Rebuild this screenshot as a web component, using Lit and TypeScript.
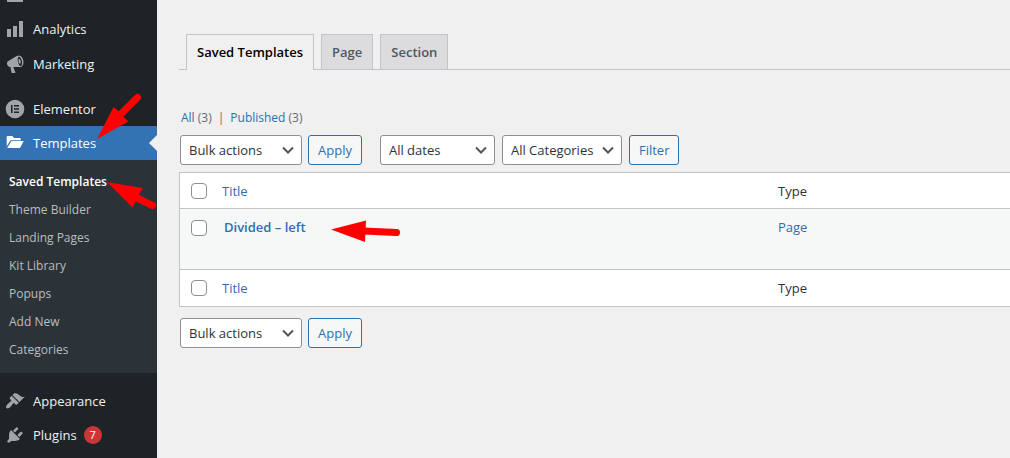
import { LitElement, html, css, svg, nothing } from "lit";
import { customElement, property } from "lit/decorators.js";

const icons: Record<string, unknown> = {
  box: svg`<path d="M2 2h16v15h-16z"/>`,
  analytics: svg`<path d="M2 10h4v8H2zM8 7h4v11H8zM14 2h4v16h-4z"/>`,
  marketing: svg`<path fill-rule="evenodd" d="M18.150 5.940c.460 1.620.380 3.220-.020 4.480-.420 1.280-1.260 2.180-2.300 2.480-.160.060-.260.060-.400.060-.060.020-.120.020-.180.020-.060.020-.140.020-.220.020h-6.800l2.220 5.500c.020.140-.060.260-.140.340-.080.100-.200.160-.340.160H6.950c-.100 0-.220-.060-.320-.160-.080-.080-.160-.200-.160-.340L5.450 13c-1.080-.120-1.880-.320-2.580-1.260-.500-.700-.800-1.340-.940-2.020-.060-1.040.360-2.100 1.500-2.820L11.650 2.100c.1-.08.25-.14.4-.2.5-.26 1.080-.5 1.780-.4 1.080.1 2.120.7 2.900 1.600.6.740 1.120 1.740 1.420 2.840zm-1.560 5.500c.300-.580.460-1.420.460-2.340 0-.820-.100-1.700-.360-2.560-.220-.880-.560-1.680-.960-2.360-.400-.640-.860-1.120-1.300-1.300-.240-.100-.460-.100-.660-.040-.260.060-.460.280-.620.560-.280.580-.440 1.420-.440 2.340 0 .820.100 1.700.360 2.560.220.880.560 1.680.960 2.360.400.640.860 1.120 1.300 1.300.240.100.460.100.660.040.260-.060.440-.260.600-.560zm-1.900-6.500c.6.700 1.050 1.700 1.100 2.800.05 1.100-.2 1.900-.8 2.100l-1-.5c-.5-1.300-.7-2.900-.3-4.300z"/>`,
  elementor: svg`<path fill-rule="evenodd" d="M10 .7a9.300 9.300 0 1 0 0 18.600 9.300 9.300 0 0 0 0-18.600zM6 6h1.500v8H6zM9 6h5v1.500H9zM9 9.250h5v1.500H9zM9 12.500h5V14H9z"/>`,
  folder: svg`<path d="M1.700 13.300V4.200c0-.8.500-1.300 1.300-1.300h4.300l1.700 2h5.500c.8 0 1.300.5 1.300 1.300v1H7c-1.100 0-1.800.4-2.300 1.300zM2.300 14.700 5.800 9c.4-.7.800-.9 1.500-.9h11.400L15.500 14c-.3.600-.7 1-1.500 1H2.500z"/>`,
  appearance: svg`<path d="M14.480 11.060 7.410 3.990l1.500-1.500c.5-.56 2.300-.470 3.510.320 1.210.800 1.430 1.280 2.910 2.100 1.180.640 2.450 1.260 4.450.850zm-.710.710L6.700 4.700 4.930 6.470c-.390.390-.390 1.020 0 1.410l1.060 1.060c.390.390.390 1.030 0 1.420-.6.600-1.430 1.110-2.210 1.690-.350.260-.700.530-1.010.840C1.430 14.230.400 16.080 1.400 17.070c.990 1 2.840-.030 4.180-1.360.310-.310.580-.660.850-1.020.570-.780 1.080-1.610 1.690-2.210.390-.390 1.020-.390 1.410 0l1.060 1.060c.390.390 1.020.390 1.410 0z"/>`,
  plugins: svg`<path d="M13.110 4.360 9.870 7.600 8 5.730l3.240-3.240c.350-.340 1.050-.200 1.560.320.520.510.660 1.210.310 1.550zm-8 1.770.910-1.120 9.010 9.010-1.190.840c-.710.710-2.630 1.160-3.820 1.160H6.140L4.900 17.260c-.590.590-1.540.590-2.120 0-.590-.580-.590-1.530 0-2.120l1.240-1.240v-3.880c0-1.130.400-3.190 1.090-3.890zm7.260 3.970 3.240-3.240c.340-.350 1.040-.210 1.550.310.520.510.660 1.210.310 1.550l-3.240 3.250z"/>`,
};

@customElement("admin-menu-item")
class AdminMenuItem extends LitElement {
  @property() icon = "";
  @property() label = "";
  @property({ type: Number }) count = 0;
  @property({ type: Boolean, reflect: true }) current = false;

  static styles = css`
    :host { display: block; }
    .link {
      position: relative;
      display: flex;
      align-items: center;
      gap: 8px;
      height: 34px;
      padding-left: 5px;
      color: #f0f0f1;
      text-decoration: none;
      font-size: 13px;
      line-height: 18px;
    }
    .icon { width: 20px; height: 20px; fill: #a0a5aa; }
    .count {
      min-width: 18px;
      height: 18px;
      margin-left: -1px;
      border-radius: 9px;
      background: #d03535;
      color: #fff;
      font-size: 11px;
      text-align: center;
    }
    :host([current]) .link { background: #3373b4; color: #fff; }
    :host([current]) .icon { fill: #fff; }
    :host([current]) .link::after {
      content: "";
      position: absolute;
      right: 0;
      top: 50%;
      margin-top: -8px;
      border: 8px solid transparent;
      border-left-width: 0;
      border-right-color: #f0f0f0;
    }
  `;

  render() {
    return html`<a class="link" href="#" aria-current=${this.current ? "page" : nothing}>
      <svg class="icon" viewBox="0 0 20 20" aria-hidden="true">${icons[this.icon]}</svg>
      <span>${this.label}</span>
      ${this.count ? html`<span class="count">${this.count}</span>` : nothing}
    </a>`;
  }
}

@customElement("admin-select")
class AdminSelect extends LitElement {
  @property() label = "";
  @property() value = "";

  static styles = css`
    :host { display: grid; }
    .select {
      grid-area: 1 / 1;
      appearance: none;
      width: 100%;
      height: 30px;
      margin: 0;
      padding: 0 24px 0 8px;
      border: 1px solid #8c8f94;
      border-radius: 3px;
      background: #fff;
      color: #2c3338;
      font: inherit;
    }
    .chevron {
      grid-area: 1 / 1;
      place-self: center end;
      width: 12px;
      height: 8px;
      margin-right: 8px;
      fill: none;
      stroke: #50575e;
      stroke-width: 2;
      pointer-events: none;
    }
  `;

  render() {
    return html`<select class="select" aria-label=${this.label}><option>${this.value}</option></select>
      <svg class="chevron" viewBox="0 0 12 8" aria-hidden="true"><path d="M1 1.500 6 6.500 11 1.500"/></svg>`;
  }
}

@customElement("app-root")
class AppRoot extends LitElement {
  static styles = css`
    :host {
      position: relative;
      display: flex;
      min-height: 100vh;
      overflow: hidden;
      background: #f0f0f0;
      color: #3c434a;
      font: 13px/18px "Open Sans", "Noto Sans", sans-serif;
    }
    a { color: #2e6fb0; text-decoration: none; }
    .sidebar { flex: none; width: 157px; background: #1d2327; }
    .menu { display: flex; flex-direction: column; margin-top: -22px; }
    .group-start { margin-top: 11px; }
    .spaced { margin-bottom: 1px; }
    .submenu {
      display: flex;
      flex-direction: column;
      margin: 0;
      padding: 8px 0 9px;
      list-style: none;
      background: #2c3338;
    }
    .submenu-link {
      display: block;
      padding: 5px 9px;
      color: #b9bdc1;
      font-size: 12px;
      line-height: 18px;
    }
    .submenu-link.active { color: #fff; font-weight: 600; }
    .main { flex: 1; min-width: 0; padding: 34px 0 0 22px; }
    .tabs {
      display: flex;
      gap: 7px;
      padding-left: 7px;
      border-bottom: 1px solid #c3c4c7;
    }
    .tab {
      padding: 8px 10px;
      border: 1px solid #c3c4c7;
      border-bottom: 0;
      background: #dcdcde;
      color: #50575e;
      font-size: 13px;
      font-weight: 600;
      line-height: 18px;
    }
    .tab.active { margin-bottom: -1px; padding-bottom: 9px; background: #f0f0f0; color: #000; }
    .views { display: flex; gap: 6px; margin-top: 39px; padding-left: 2px; color: #646970; font-size: 12px; }
    .toolbar { display: flex; gap: 6px; padding-left: 1px; }
    .toolbar.top { margin: 8px 0 7px; }
    .toolbar.bottom { margin-top: 11px; }
    .filters { display: flex; gap: 7px; margin-left: 12px; }
    .bulk { width: 122px; }
    .dates { width: 115px; }
    .categories { width: 120px; }
    .button {
      height: 30px;
      margin: 0;
      padding: 0 9px;
      border: 1px solid #2e6fb0;
      border-radius: 3px;
      background: #f6f7f7;
      color: #2e6fb0;
      font: inherit;
    }
    .table {
      width: 100%;
      table-layout: fixed;
      border: 1px solid #c3c4c7;
      border-right: 0;
      border-spacing: 0;
      background: #fff;
    }
    .table th, .table td { padding: 0; text-align: left; font-weight: 400; color: #2c3338; }
    .table th { height: 35px; }
    .table thead th { border-bottom: 1px solid #c3c4c7; }
    .table tfoot th { height: 36px; border-top: 1px solid #c3c4c7; }
    .table td { height: 51px; padding-top: 9px; vertical-align: top; background: #f6f7f7; }
    .table .check { width: 42px; padding-left: 11px; box-sizing: border-box; }
    .table td.check { height: 60px; }
    .table .type { width: 232px; }
    .table .title { padding-left: 2px; }
    .title a { font-weight: 600; }
    .checkbox {
      appearance: none;
      display: block;
      box-sizing: border-box;
      width: 16px;
      height: 16px;
      margin: 0;
      border: 1px solid #8c8f94;
      border-radius: 4px;
      background: #fff;
    }
    td .checkbox { margin-top: 2px; }
    .arrows {
      position: absolute;
      top: 0;
      left: 0;
      width: 1010px;
      height: 458px;
      fill: #f00;
      stroke: #f00;
      stroke-linecap: round;
      pointer-events: none;
    }
  `;

  private submenu = ["Saved Templates", "Theme Builder", "Landing Pages", "Kit Library", "Popups", "Add New", "Categories"];

  private headings() {
    return html`<tr>
      <th class="check"><input class="checkbox" type="checkbox" aria-label="Select all" /></th>
      <th><a href="#">Title</a></th>
      <th class="type">Type</th>
    </tr>`;
  }

  private bulkActions() {
    return html`<admin-select class="bulk" label="Select bulk action" value="Bulk actions"></admin-select>
      <button class="button" type="button">Apply</button>`;
  }

  render() {
    return html`
      <nav class="sidebar" aria-label="Main menu">
        <div class="menu">
          <admin-menu-item icon="box"></admin-menu-item>
          <admin-menu-item class="spaced" icon="analytics" label="Analytics"></admin-menu-item>
          <admin-menu-item icon="marketing" label="Marketing"></admin-menu-item>
          <admin-menu-item class="group-start" icon="elementor" label="Elementor"></admin-menu-item>
          <admin-menu-item icon="folder" label="Templates" current></admin-menu-item>
          <ul class="submenu">
            ${this.submenu.map((name, i) => html`<li><a class="submenu-link ${i === 0 ? "active" : ""}" href="#">${name}</a></li>`)}
          </ul>
          <admin-menu-item class="group-start" icon="appearance" label="Appearance"></admin-menu-item>
          <admin-menu-item icon="plugins" label="Plugins" .count=${7}></admin-menu-item>
        </div>
      </nav>
      <main class="main">
        <nav class="tabs" aria-label="Template types">
          <a class="tab active" href="#">Saved Templates</a>
          <a class="tab" href="#">Page</a>
          <a class="tab" href="#">Section</a>
        </nav>
        <div class="views">
          <span><a href="#">All</a> (3)</span>
          <span>|</span>
          <span><a href="#">Published</a> (3)</span>
        </div>
        <div class="toolbar top">
          ${this.bulkActions()}
          <div class="filters">
            <admin-select class="dates" label="Filter by date" value="All dates"></admin-select>
            <admin-select class="categories" label="Filter by category" value="All Categories"></admin-select>
            <button class="button" type="button">Filter</button>
          </div>
        </div>
        <table class="table">
          <thead>${this.headings()}</thead>
          <tbody>
            <tr>
              <td class="check"><input class="checkbox" type="checkbox" aria-label="Select Divided – left" /></td>
              <td class="title"><a href="#">Divided – left</a></td>
              <td class="type"><a href="#">Page</a></td>
            </tr>
          </tbody>
          <tfoot>${this.headings()}</tfoot>
        </table>
        <div class="toolbar bottom">${this.bulkActions()}</div>
      </main>
      <svg class="arrows" viewBox="0 0 1010 458" aria-hidden="true">
        <path stroke="none" d="M97 139 113.500 107 119 111.500 123.500 117 128.500 121.500z"/>
        <path stroke-width="7" d="M119 116 137.500 97.500"/>
        <path stroke="none" d="M107 182 142.500 188 132.500 207.500z"/>
        <path stroke-width="7" d="M137 198 152.500 205.500"/>
        <path stroke="none" d="M331 229.500 366 220.500 365 242z"/>
        <path stroke-width="7" d="M364 231 396.500 232.500"/>
      </svg>
    `;
  }
}
